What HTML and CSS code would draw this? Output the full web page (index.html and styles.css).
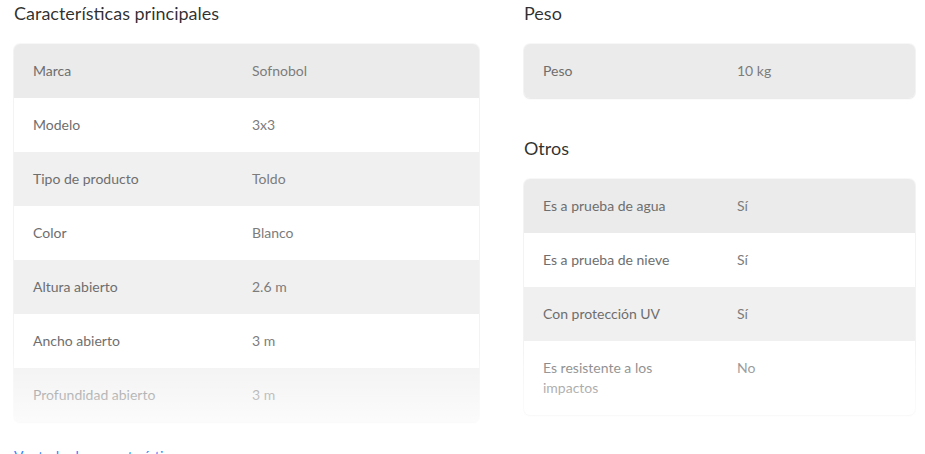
FILE: index.html
```html
<!DOCTYPE html>
<html lang="es">
<head>
<meta charset="utf-8">
<title>Características</title>
<link rel="stylesheet" href="styles.css">
</head>
<body>
<section class="specs">
  <div class="specs-grid">
    <div class="col col-left">
      <h2 class="heading">Características principales</h2>
      <div class="table table-left">
        <div class="row"><div class="label">Marca</div><div class="value">Sofnobol</div></div>
        <div class="row"><div class="label">Modelo</div><div class="value">3x3</div></div>
        <div class="row"><div class="label">Tipo de producto</div><div class="value">Toldo</div></div>
        <div class="row"><div class="label">Color</div><div class="value">Blanco</div></div>
        <div class="row"><div class="label">Altura abierto</div><div class="value">2.6 m</div></div>
        <div class="row"><div class="label">Ancho abierto</div><div class="value">3 m</div></div>
        <div class="row"><div class="label">Profundidad abierto</div><div class="value">3 m</div></div>
      </div>
    </div>
    <div class="col col-right">
      <h2 class="heading">Peso</h2>
      <div class="table table-right">
        <div class="row"><div class="label">Peso</div><div class="value">10 kg</div></div>
      </div>
      <h2 class="heading heading-next">Otros</h2>
      <div class="table table-right">
        <div class="row"><div class="label">Es a prueba de agua</div><div class="value">Sí</div></div>
        <div class="row"><div class="label">Es a prueba de nieve</div><div class="value">Sí</div></div>
        <div class="row"><div class="label">Con protección UV</div><div class="value">Sí</div></div>
        <div class="row"><div class="label">Es resistente a los impactos</div><div class="value">No</div></div>
      </div>
    </div>
    <div class="fade"></div>
  </div>
  <a class="more" href="#">Ver todas las características</a>
</section>
</body>
</html>
```

FILE: styles.css
```css
* { box-sizing: border-box; }
html, body { margin: 0; padding: 0; background: #fff; }
body {
  font-family: Lato, "Open Sans", Arial, sans-serif;
  color: #707070;
  -webkit-font-smoothing: antialiased;
}
.specs { padding: 0 10px 0 14px; }
.specs-grid {
  position: relative;
  display: grid;
  grid-template-columns: 465px 391px;
  column-gap: 45px;
  align-items: start;
}
.heading {
  margin: 1px 0 19px;
  font-size: 18px;
  line-height: 24px;
  font-weight: 400;
  color: rgba(0,0,0,0.82);
}
.heading-next { margin-top: 38px; }
.table {
  border-radius: 6px;
  overflow: hidden;
  background: #fff;
  box-shadow: 0 0 0 1px rgba(0,0,0,0.03), 0 1px 2px rgba(0,0,0,0.07);
}
.row {
  display: grid;
  font-size: 14px;
  line-height: 20px;
}
.table-left .row { grid-template-columns: 219px 1fr; }
.table-right .row { grid-template-columns: 194px 1fr; }
.row:nth-child(odd) { background: #f0f0f0; }
.row:first-child { background: #ebebeb; }
.label, .value { padding: 17px 19px; }
.label { color: #6e6e6e; }
.value { color: #7c7c7c; }
.fade {
  position: absolute;
  left: -14px;
  right: -10px;
  bottom: -10px;
  height: 90px;
  background: linear-gradient(to bottom, rgba(255,255,255,0), rgba(255,255,255,0.85));
  pointer-events: none;
}
.more {
  display: inline-block;
  margin-top: 24px;
  font-size: 14px;
  line-height: 20px;
  color: #3483fa;
  text-decoration: none;
}
```
